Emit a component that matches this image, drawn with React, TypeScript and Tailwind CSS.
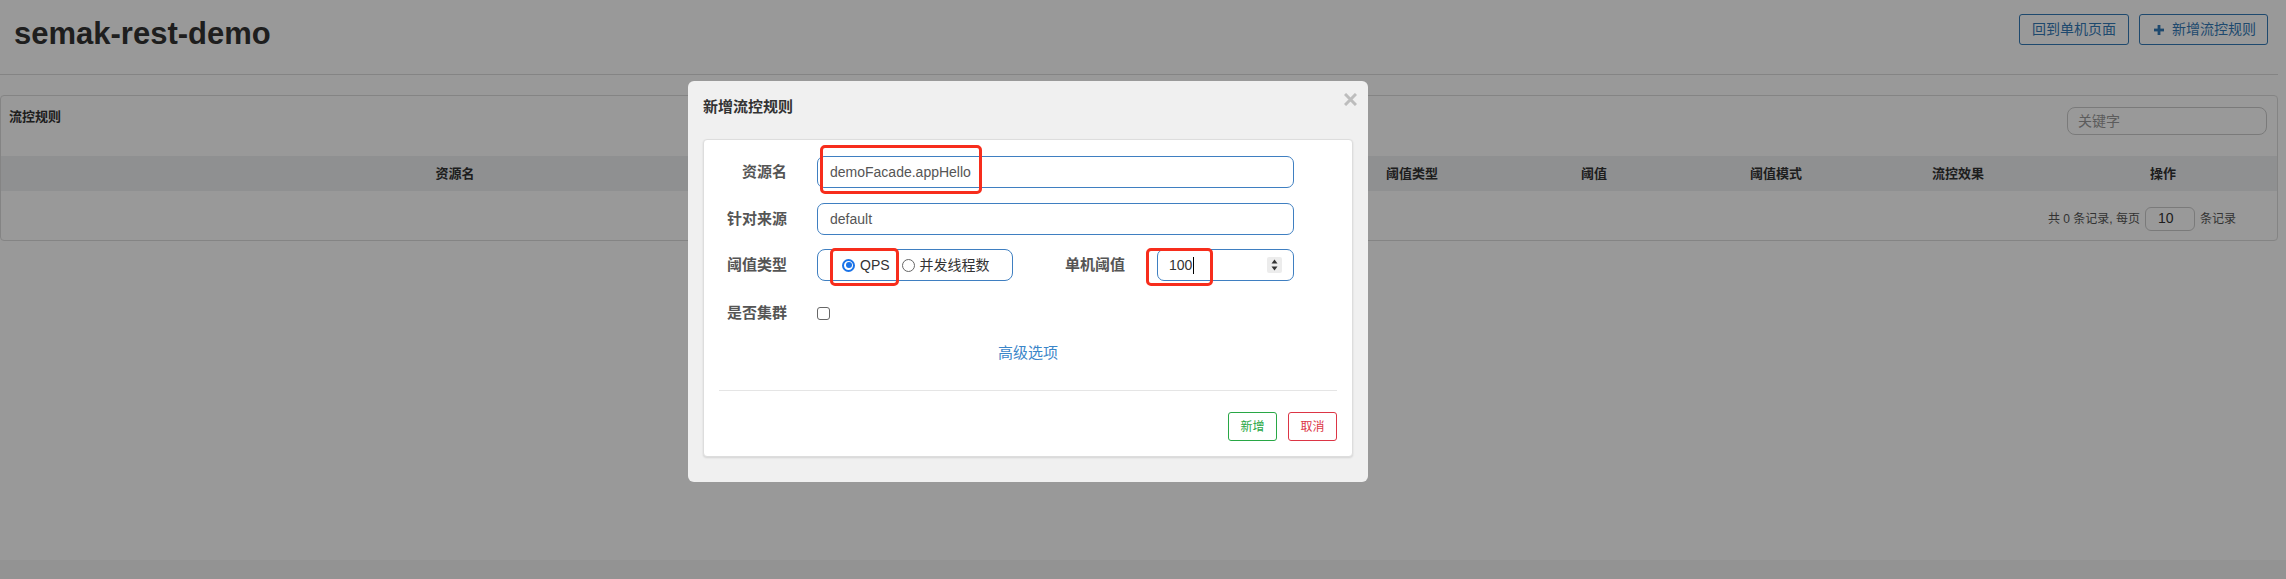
import React from 'react';

const columns = [
  { label: '资源名', w: 'w-[908px]' },
  { label: '来源应用', w: 'w-[206px]' },
  { label: '流控模式', w: 'w-[206px]' },
  { label: '阈值类型', w: 'w-[182px]' },
  { label: '阈值', w: 'w-[182px]' },
  { label: '阈值模式', w: 'w-[182px]' },
  { label: '流控效果', w: 'w-[182px]' },
  { label: '操作', w: 'flex-1' },
];

const Radio = ({ checked }: { checked?: boolean }) =>
  checked ? (
    <span className="flex h-[13px] w-[13px] shrink-0 items-center justify-center rounded-full border-[2px] border-[#1a73e8] bg-white">
      <span className="h-[6px] w-[6px] rounded-full bg-[#1a73e8]" />
    </span>
  ) : (
    <span className="block h-[13px] w-[13px] shrink-0 rounded-full border border-[#666] bg-white" />
  );

// red annotation frame drawn over the screenshot
const Mark = ({ className }: { className: string }) => (
  <div className={`pointer-events-none absolute rounded-[5px] border-[3px] border-[#f72d1c] ${className}`} />
);

const FormLabel = ({ children, w = 'w-[83px]' }: { children: React.ReactNode; w?: string }) => (
  <label className={`${w} shrink-0 text-right text-[15px] font-bold text-[#555]`}>{children}</label>
);

export default function App() {
  return (
    <div className="relative h-[579px] w-full overflow-hidden bg-white font-['Liberation_Sans','Noto_Sans_CJK_SC',sans-serif] text-[#333]">
      <div className="h-[560px] w-[2278px]">
        {/* page header */}
        <header className="flex h-[75px] items-start justify-between border-b border-[#ddd]">
          <h1 className="ml-[14px] mt-[16px] text-[31px] font-bold leading-[36px] text-[#333]">
            semak-rest-demo
          </h1>
          <div className="mr-[10px] mt-[14px] flex gap-[10px]">
            <button className="h-[31px] w-[110px] rounded-[3px] border border-[#337ab7] bg-white text-[14px] text-[#337ab7]">
              回到单机页面
            </button>
            <button className="flex h-[31px] w-[129px] items-center gap-[8px] rounded-[3px] border border-[#337ab7] bg-white pl-[14px] text-[14px] text-[#337ab7]">
              <svg width="10" height="10" viewBox="0 0 10 10" fill="#337ab7">
                <rect x="3.6" y="0" width="2.8" height="10" />
                <rect x="0" y="3.6" width="10" height="2.8" />
              </svg>
              新增流控规则
            </button>
          </div>
        </header>

        {/* rules panel */}
        <section className="mt-[20px] h-[146px] rounded-[4px] border border-[#ddd]">
          <div className="flex h-[60px] items-start justify-between">
            <div className="pl-[8px] pt-[12px] text-[13px] font-bold leading-[18px]">流控规则</div>
            <input
              readOnly
              placeholder="关键字"
              className="mr-[10px] mt-[11px] h-[28px] w-[200px] rounded-[8px] border border-[#ccc] px-[10px] text-[14px] placeholder:text-[#999]"
            />
          </div>
          <div className="flex h-[35px] items-center bg-[#eef0f2] text-[13px] font-bold text-[#333]">
            {columns.map((c) => (
              <div key={c.label} className={`${c.w} text-center`}>
                {c.label}
              </div>
            ))}
          </div>
          <div className="flex h-[49px] items-center justify-end gap-[5px] pr-[41px] pt-[6px] text-[12px] text-[#555]">
            <span>共 0 条记录, 每页</span>
            <span className="flex h-[24px] w-[50px] items-center rounded-[6px] border border-[#ccc] pl-[12px] text-[14px] text-[#333]">
              10
            </span>
            <span>条记录</span>
          </div>
        </section>
      </div>
      <div className="h-[19px] bg-[#f5f5f5]" />

      {/* modal backdrop */}
      <div className="absolute inset-0 bg-black/40">
        <div className="absolute left-[688px] top-[81px] h-[401px] w-[680px] rounded-[6px] bg-[#f0f0f0]">
          <div className="h-[58px] pl-[15px] pt-[17px] text-[15px] font-bold leading-[18px] text-[#333]">新增流控规则</div>
          <button className="absolute right-[11px] top-[12px]">
            <svg width="13" height="13" viewBox="0 0 13 13" stroke="#bdbdbd" strokeWidth="3">
              <path d="M1 1 L12 12 M12 1 L1 12" />
            </svg>
          </button>

          <div className="mx-[15px] h-[318px] rounded-[4px] border border-[#ddd] bg-white pt-[16px] shadow-[0_1px_2px_rgba(0,0,0,0.12)]">
            <div className="flex h-[32px] items-center">
              <FormLabel>资源名</FormLabel>
              <input
                readOnly
                value="demoFacade.appHello"
                className="ml-[30px] h-[32px] w-[477px] rounded-[7px] border border-[#3f7fc1] pl-[12px] text-[14px] text-[#555] outline-none"
              />
            </div>
            <div className="mt-[15px] flex h-[32px] items-center">
              <FormLabel>针对来源</FormLabel>
              <input
                readOnly
                value="default"
                className="ml-[30px] h-[32px] w-[477px] rounded-[7px] border border-[#3f7fc1] pl-[12px] text-[14px] text-[#555] outline-none"
              />
            </div>
            <div className="mt-[14px] flex h-[32px] items-center">
              <FormLabel>阈值类型</FormLabel>
              <div className="ml-[30px] flex h-[32px] w-[196px] items-center rounded-[8px] border border-[#3f7fc1] pl-[24px] text-[14px] text-[#333]">
                <Radio checked />
                <span className="ml-[5px]">QPS</span>
                <span className="ml-[12px] flex items-center">
                  <Radio />
                </span>
                <span className="ml-[5px]">并发线程数</span>
              </div>
              <FormLabel w="w-[112px]">单机阈值</FormLabel>
              <div className="ml-[32px] flex h-[32px] w-[137px] items-center justify-between rounded-[7px] border border-[#3f7fc1] pl-[11px] pr-[11px] text-[14px] text-[#333]">
                <span className="flex items-center">
                  100
                  <span className="ml-[1px] h-[17px] w-px bg-black" />
                </span>
                <span className="flex h-[16px] w-[15px] items-center justify-center rounded-[2px] bg-[#ececec]">
                  <svg width="7" height="12" viewBox="0 0 7 12" fill="#333">
                    <path d="M3.5 0.5 L6.5 4.5 L0.5 4.5 Z M3.5 11.5 L6.5 7.5 L0.5 7.5 Z" />
                  </svg>
                </span>
              </div>
            </div>
            <div className="mt-[16px] flex h-[32px] items-center">
              <FormLabel>是否集群</FormLabel>
              <span className="ml-[30px] h-[13px] w-[13px] rounded-[3px] border border-[#666] bg-white" />
            </div>
            <div className="mt-[12px] h-[24px] text-center text-[15px] leading-[24px] text-[#3b86c9]">高级选项</div>
            <div className="mx-[15px] mt-[25px] h-px bg-[#e5e5e5]" />
            <div className="mt-[21px] flex justify-end gap-[11px] pr-[15px]">
              <button className="h-[29px] w-[49px] rounded-[3px] border border-[#28a745] bg-white text-[12px] text-[#28a745]">
                新增
              </button>
              <button className="h-[29px] w-[49px] rounded-[3px] border border-[#dc3545] bg-white text-[12px] text-[#dc3545]">
                取消
              </button>
            </div>
          </div>

          <Mark className="left-[132px] top-[64px] h-[49px] w-[162px]" />
          <Mark className="left-[142px] top-[167px] h-[38px] w-[69px]" />
          <Mark className="left-[458px] top-[167px] h-[38px] w-[67px]" />
        </div>
      </div>
    </div>
  );
}
